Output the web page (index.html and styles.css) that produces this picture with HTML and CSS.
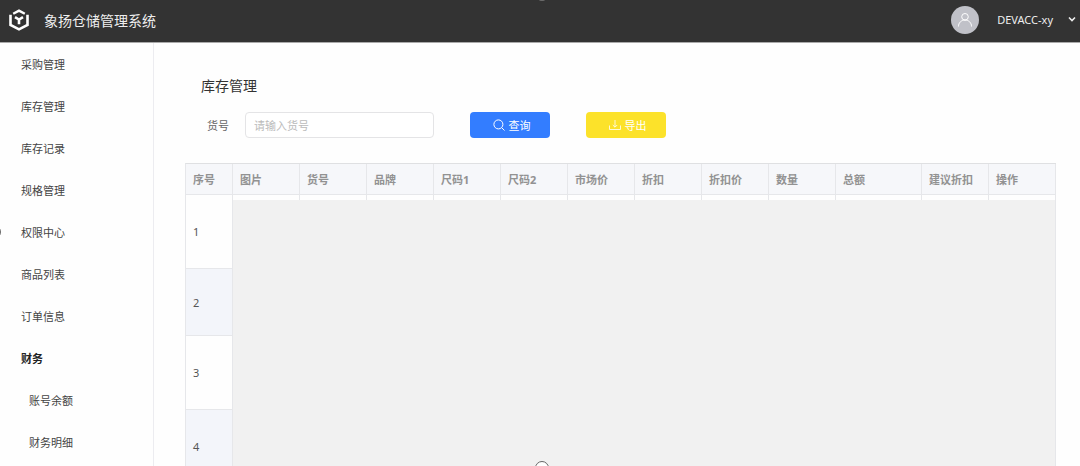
FILE: index.html
```html
<!DOCTYPE html>
<html lang="zh-CN">
<head>
<meta charset="utf-8">
<title>象扬仓储管理系统</title>
<link rel="stylesheet" href="styles.css">
</head>
<body>
<header class="topbar">
  <svg class="logo" viewBox="0 0 20 22" fill="none" stroke="currentColor" aria-hidden="true">
    <path stroke-width="2.4" d="M4.200 4.700 10 1.600l5.800 3.100"/>
    <path stroke-width="2.6" d="M1.500 5.800v10.200L10 20.400l8.500-4.400V5.800"/>
    <path stroke-width="2.6" d="M6 8.200l4 2.400 4-2.400M10 10v5.200"/>
  </svg>
  <h1 class="brand">象扬仓储管理系统</h1>
  <span class="avatar">
    <svg class="avatar-icon" viewBox="0 0 16 16" fill="none" stroke="currentColor" aria-hidden="true"><circle cx="8" cy="4.800" r="3.300"/><path d="M1.500 14.500c0-3.800 2.700-6.400 6.500-6.400s6.500 2.600 6.500 6.400"/></svg>
  </span>
  <button class="account" type="button">DEVACC-xy
    <svg class="chevron" viewBox="0 0 8 8" fill="none" stroke="currentColor" stroke-width="1.600" aria-hidden="true"><path d="M1 2.500l3 3 3-3"/></svg>
  </button>
</header>
<div class="layout">
  <nav class="sidebar">
    <a class="nav-item" href="#">采购管理</a>
    <a class="nav-item" href="#">库存管理</a>
    <a class="nav-item" href="#">库存记录</a>
    <a class="nav-item" href="#">规格管理</a>
    <a class="nav-item" href="#">权限中心</a>
    <a class="nav-item" href="#">商品列表</a>
    <a class="nav-item" href="#">订单信息</a>
    <a class="nav-item nav-group" href="#">财务</a>
    <a class="nav-item nav-child" href="#">账号余额</a>
    <a class="nav-item nav-child" href="#">财务明细</a>
  </nav>
  <main class="content">
    <h2 class="page-title">库存管理</h2>
    <form class="search">
      <label class="search-label" for="sku">货号</label>
      <input class="search-input" id="sku" type="text" placeholder="请输入货号">
      <button class="btn btn-primary" type="button">
        <svg class="btn-icon" viewBox="0 0 12 12" fill="none" stroke="currentColor" aria-hidden="true"><circle cx="5.400" cy="5.400" r="4.500"/><path d="M8.700 8.700l2.800 2.800"/></svg>查询</button>
      <button class="btn btn-export" type="button">
        <svg class="btn-icon" viewBox="0 0 12 12" fill="none" stroke="currentColor" stroke-opacity=".8" aria-hidden="true"><path d="M.500 6.500v4h11v-4M6 1v7M3.800 6 6 8.200 8.200 6"/></svg>导出</button>
    </form>
    <div class="table-wrap">
      <table class="stock">
        <colgroup>
          <col class="c-index"><col class="c-std"><col class="c-std"><col class="c-std"><col class="c-std"><col class="c-std"><col class="c-std"><col class="c-std"><col class="c-std"><col class="c-std"><col class="c-total"><col class="c-std"><col class="c-std">
        </colgroup>
        <thead>
          <tr><th>序号</th><th>图片</th><th>货号</th><th>品牌</th><th>尺码1</th><th>尺码2</th><th>市场价</th><th>折扣</th><th>折扣价</th><th>数量</th><th>总额</th><th>建议折扣</th><th>操作</th></tr>
        </thead>
        <tbody>
          <tr class="tall"><td>1</td><td></td><td></td><td></td><td></td><td></td><td></td><td></td><td></td><td></td><td></td><td></td><td></td></tr>
          <tr><td>2</td><td></td><td></td><td></td><td></td><td></td><td></td><td></td><td></td><td></td><td></td><td></td><td></td></tr>
          <tr class="tall"><td>3</td><td></td><td></td><td></td><td></td><td></td><td></td><td></td><td></td><td></td><td></td><td></td><td></td></tr>
          <tr class="tall"><td>4</td><td></td><td></td><td></td><td></td><td></td><td></td><td></td><td></td><td></td><td></td><td></td><td></td></tr>
        </tbody>
      </table>
      <div class="mask"></div>
    </div>
  </main>
</div>
<span class="handle handle-top"></span>
<span class="handle handle-left"></span>
<span class="handle handle-bottom"></span>
</body>
</html>
```
FILE: styles.css
```css
* {
  box-sizing: border-box;
}

body {
  position: relative;
  display: flex;
  flex-direction: column;
  height: 100vh;
  margin: 0;
  overflow: hidden;
  background: #fefefe;
  color: #555;
  font-family: "Noto Sans", "Noto Sans CJK SC", sans-serif;
  font-size: 11px;
}

.topbar {
  display: flex;
  flex: none;
  align-items: center;
  height: 43px;
  padding: 0 4px 2px 9px;
  border-bottom: 1px solid #aaa;
  background: #333;
  color: #fff;
}

.logo {
  width: 20px;
  height: 22px;
}

.brand {
  margin: 0 auto 0 15px;
  color: #eee;
  font-size: 14px;
  font-weight: 400;
}

.avatar {
  display: grid;
  place-items: center;
  width: 28px;
  height: 28px;
  margin-right: 18px;
  border-radius: 50%;
  background: #c0c1c8;
}

.avatar-icon {
  width: 16px;
  height: 16px;
}

.account {
  display: flex;
  align-items: center;
  gap: 15px;
  padding: 0 0 2px;
  border: 0;
  background: none;
  color: #eee;
  font: inherit;
}

.chevron {
  width: 8px;
  height: 8px;
}

.layout {
  display: flex;
  flex: 1;
  min-height: 0;
}

.sidebar {
  flex: none;
  width: 154px;
  padding-top: 1px;
  border-right: 1px solid #ececf0;
}

.nav-item {
  display: block;
  padding-left: 21px;
  color: #444;
  line-height: 42px;
  text-decoration: none;
}

.nav-group {
  color: #222;
  font-weight: 700;
}

.nav-child {
  padding-left: 29px;
}

.content {
  flex: 1;
  min-width: 0;
  padding: 32px 25px 0 31px;
  overflow: hidden;
}

.page-title {
  margin: 0 0 16px 16px;
  color: #333;
  font-size: 14px;
  font-weight: 400;
  line-height: 21px;
}

.search {
  display: flex;
  align-items: center;
  margin: 0 0 25px 22px;
}

.search-label {
  margin-right: 16px;
  color: #666;
}

.search-input {
  width: 189px;
  height: 26px;
  margin-right: 36px;
  padding: 0 8px;
  border: 1px solid #e4e4e6;
  border-radius: 4px;
  background: #fff;
  font: inherit;
}

.search-input::placeholder {
  color: #bbb;
}

.btn {
  display: flex;
  align-items: center;
  justify-content: center;
  gap: 4px;
  width: 80px;
  height: 26px;
  margin-right: 36px;
  padding: 0 0 0 3px;
  border: 0;
  border-radius: 4px;
  color: #fff;
  font: inherit;
}

.btn-primary {
  background: #337dff;
}

.btn-export {
  background: #fce22a;
}

.btn-icon {
  width: 12px;
  height: 12px;
}

.table-wrap {
  position: relative;
}

.stock {
  width: 100%;
  border-top: 1px solid #dfe0e2;
  border-left: 1px solid #e6e7ea;
  border-spacing: 0;
  table-layout: fixed;
}

.c-index {
  width: 47px;
}

.c-std {
  width: 67px;
}

.c-total {
  width: 86px;
}

.stock th,
.stock td {
  padding: 0 7px;
  border-right: 1px solid #e6e7ea;
  border-bottom: 1px solid #e6e7ea;
  text-align: left;
  white-space: nowrap;
}

.stock th {
  height: 31px;
  background: #f6f7fa;
  color: #929292;
  font-weight: 700;
}

.stock td {
  height: 67px;
}

.stock .tall td {
  height: 74px;
}

.stock tbody tr:nth-child(even) {
  background: #f3f5fa;
}

.mask {
  position: absolute;
  top: 37px;
  right: 0;
  bottom: 0;
  left: 48px;
  background: #f1f1f1;
}

.handle {
  position: absolute;
  width: 14px;
  height: 14px;
  border: 1px solid #666;
  border-radius: 50%;
  background: #fff;
}

.handle-top {
  top: -13px;
  left: calc(50% - 5px);
}

.handle-left {
  top: calc(50% - 8px);
  left: -13px;
}

.handle-bottom {
  bottom: -9px;
  left: calc(50% - 5px);
}
```
